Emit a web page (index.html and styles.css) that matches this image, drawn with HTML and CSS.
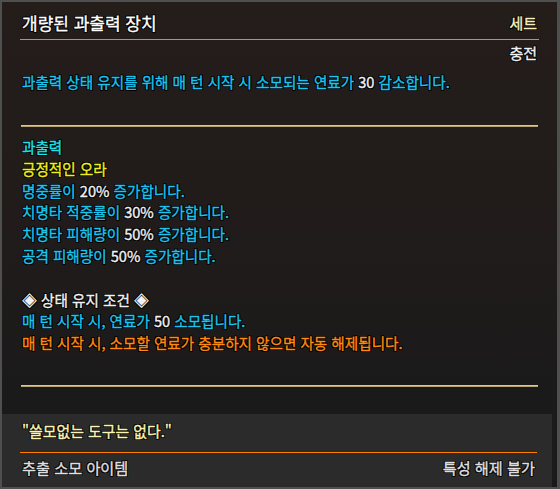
FILE: index.html
```html
<!DOCTYPE html>
<html lang="ko">
<head>
<meta charset="utf-8">
<link rel="stylesheet" href="styles.css">
</head>
<body>
<div class="tooltip">
  <div class="main">
    <div class="row title-row">
      <span class="title">개량된 과출력 장치</span>
      <span class="set">세트</span>
    </div>
    <div class="rule-orange"></div>
    <div class="row right"><span class="white">충전</span></div>
    <p class="desc blue">과출력 상태 유지를 위해 매 턴 시작 시 소모되는 연료가 <span class="white">30</span> 감소합니다.</p>
    <div class="rule-gold"></div>
    <div class="effects">
      <div class="teal">과출력</div>
      <div class="yellow">긍정적인 오라</div>
      <div class="blue">명중률이 <span class="white">20%</span> 증가합니다.</div>
      <div class="blue">치명타 적중률이 <span class="white">30%</span> 증가합니다.</div>
      <div class="blue">치명타 피해량이 <span class="white">50%</span> 증가합니다.</div>
      <div class="blue">공격 피해량이 <span class="white">50%</span> 증가합니다.</div>
      <div class="blank">&nbsp;</div>
      <div class="white">◈ 상태 유지 조건 ◈</div>
      <div class="blue">매 턴 시작 시, 연료가 <span class="white">50</span> 소모됩니다.</div>
      <div class="orange">매 턴 시작 시, 소모할 연료가 충분하지 않으면 자동 해제됩니다.</div>
    </div>
    <div class="rule-gold bottom-rule"></div>
  </div>
  <div class="footer">
    <div class="quote">"쓸모없는 도구는 없다."</div>
    <div class="rule-footer"></div>
    <div class="row foot-row">
      <span>추출 소모 아이템</span>
      <span>특성 해제 불가</span>
    </div>
  </div>
</div>
</body>
</html>
```

FILE: styles.css
```css
* { box-sizing: border-box; }
html, body { margin: 0; padding: 0; background: #1a1a1a; }
body {
  font-family: "Noto Sans CJK KR", "Noto Sans", sans-serif;
  font-size: 14.6px;
}
.tooltip {
  width: 560px;
  height: 489px;
  border: 2px solid #4f4f4f;
  border-right-width: 3px;
  background: linear-gradient(180deg, #241d1a 0%, #211c1a 40%, #1b1a1a 80%, #1a1a1a 100%);
  display: flex;
  flex-direction: column;
  -webkit-text-stroke-width: 0.35px;
  text-shadow: 1px 0 #000, -1px 0 #000, 0 1px #000, 0 -1px #000, 1px 1px #000, -1px -1px #000, 1px -1px #000, -1px 1px #000;
}
.main {
  padding: 10px 18px 0 18px;
}
.row {
  display: flex;
  justify-content: space-between;
  align-items: center;
  padding: 0 2px;
  line-height: 22px;
}
.right { justify-content: flex-end; margin-top: 2px; }
.title { color: #ffffff; font-size: 17px; }
.set { color: #f7efbf; font-size: 15px; }
.right .white { font-size: 15px; }
.rule-orange {
  height: 1px;
  background: #e3891f;
  margin-top: 5px;
}
.desc {
  margin: 7px 0 0 0;
  padding: 0 2px;
  line-height: 22px;
}
.rule-gold {
  height: 2px;
  margin-top: 32px;
  background: linear-gradient(180deg, #f0d896 0%, #a89160 100%);
  margin-left: 1px;
  margin-right: 1px;
}
.effects {
  margin-top: 9px;
  padding: 0 2px;
  line-height: 21.8px;
}
.bottom-rule { margin-top: 31px; }
.white { color: #f2f2f2; }
.blue { color: #1cc4ee; }
.teal { color: #22e0e6; }
.yellow { color: #f2ef1e; }
.orange { color: #ff8a12; }
.footer {
  margin-top: 27px;
  flex: 1;
  background: #2b2b2b;
  margin-right: 5px;
  padding: 6px 15px 0 18px;
}
.quote {
  color: #fbf4b4;
  line-height: 22px;
  padding: 0 2px;
  font-size: 14.9px;
}
.rule-footer {
  height: 1px;
  background: #ff7c00;
  margin-top: 10px;
}
.foot-row {
  color: #e0e0e0;
  margin-top: 3px;
  font-size: 15.2px;
}
```
